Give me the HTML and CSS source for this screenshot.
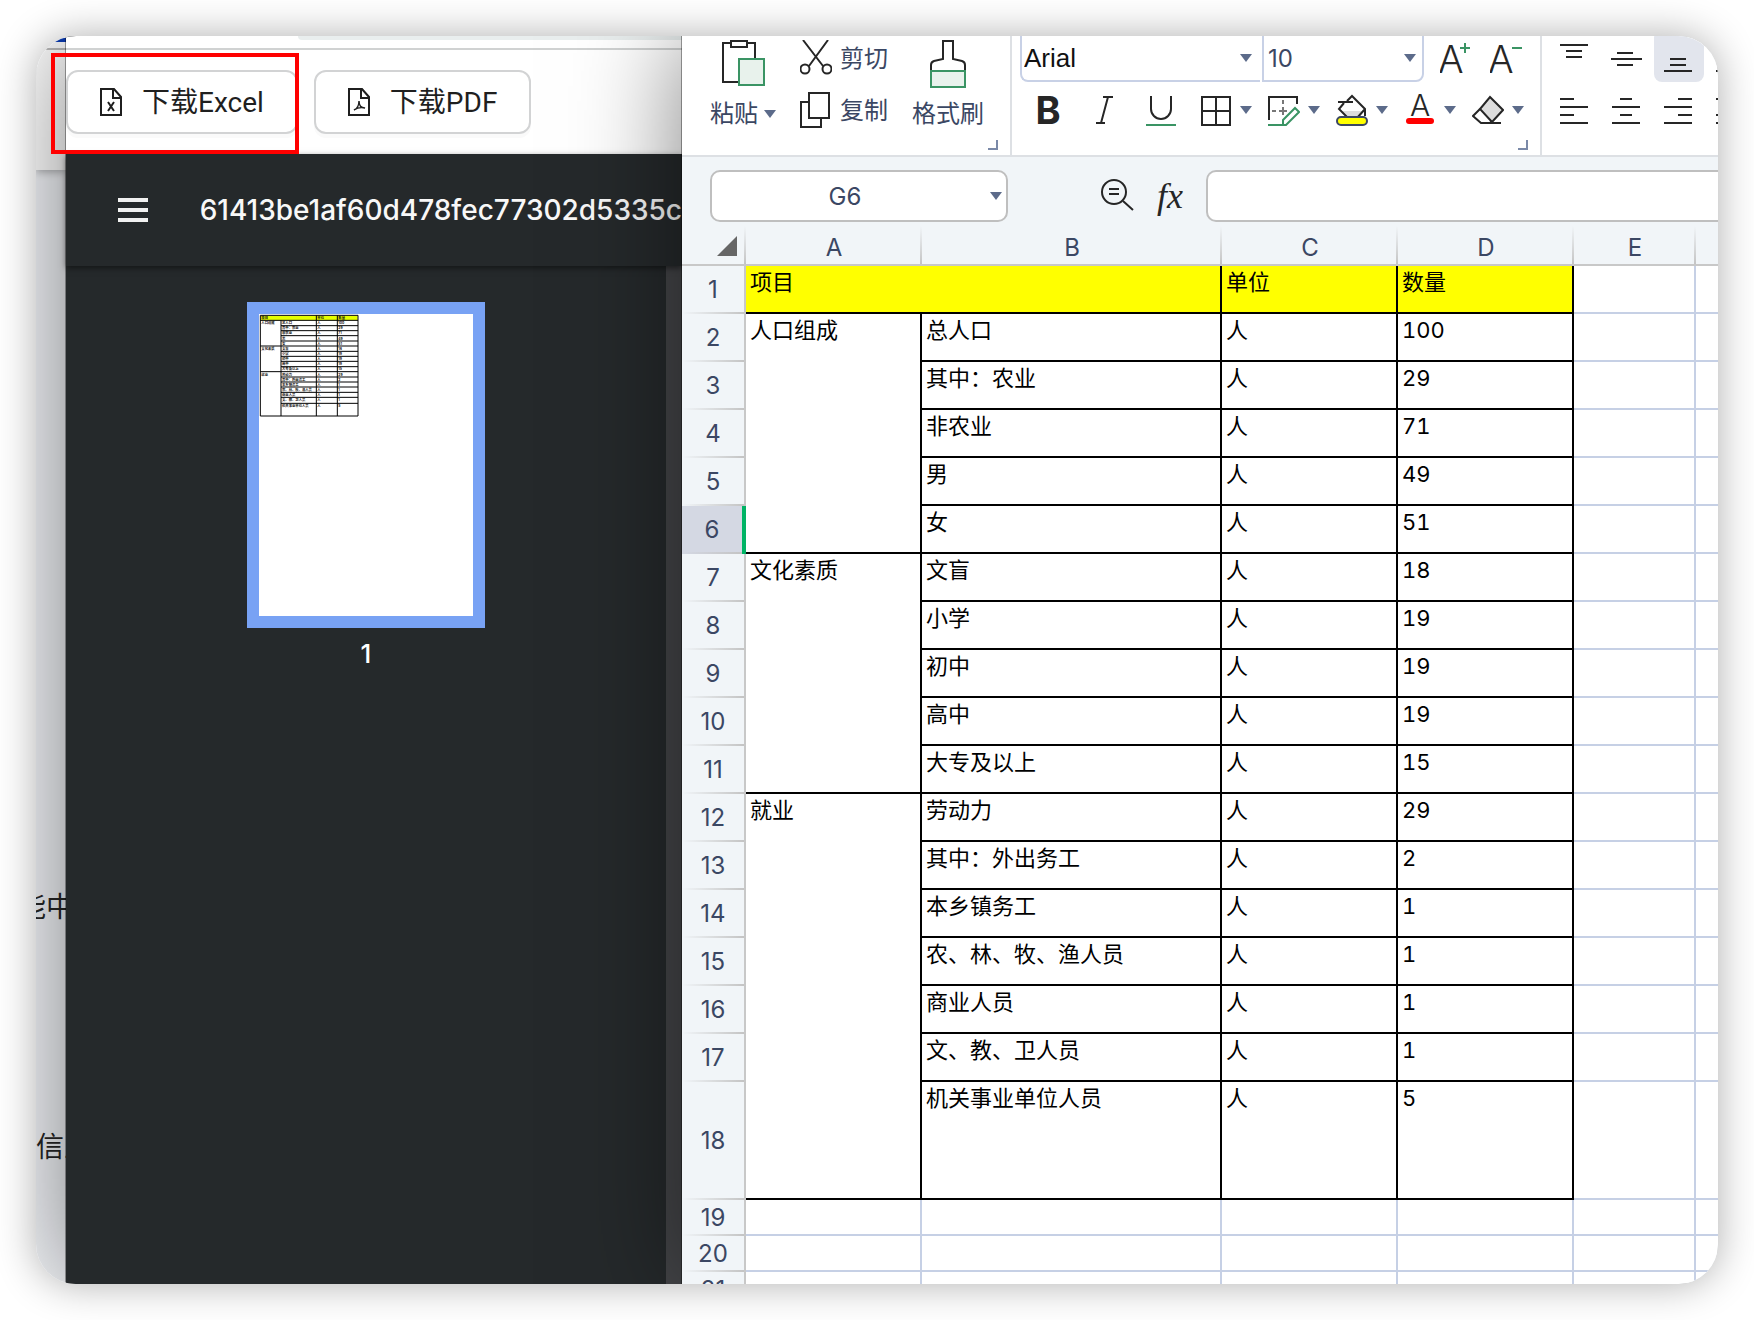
FILE: index.html
```html
<!DOCTYPE html>
<html lang="zh-CN">
<head>
<meta charset="utf-8">
<title>下载Excel</title>
<link rel="stylesheet" href="styles.css">
</head>
<body>
<svg class="defs" width="0" height="0" aria-hidden="true">
  <symbol id="caret" viewBox="0 0 12 8"><path d="M0 0h12L6 8z" fill="#5c6b8a"/></symbol>
  <symbol id="launcher" viewBox="0 0 10 10"><path d="M9 0v9H0" fill="none" stroke="#7a89a8" stroke-width="2"/></symbol>
</svg>
<main class="frame">
  <aside class="backdrop">
    <div class="backdrop-head"><span class="backdrop-tab"></span></div>
    <div class="backdrop-body">
      <p class="backdrop-text first">能中</p>
      <p class="backdrop-text second">信息</p>
    </div>
  </aside>

  <section class="browser">
    <div class="tabbar"><span class="address"></span></div>
    <div class="actions">
      <button class="download" type="button">
        <svg width="22" height="28" viewBox="0 0 22 28" fill="none" stroke="#1f1f1f" stroke-width="2"><path d="M1 1h13l7 8v18H1z"/><path d="M13 1v9h8"/><path d="M8 14l6 9M14 14l-6 9"/></svg>
        <span>下载Excel</span>
      </button>
      <button class="download" type="button">
        <svg width="22" height="28" viewBox="0 0 22 28" fill="none" stroke="#1f1f1f" stroke-width="2"><path d="M1 1h13l7 8v18H1z"/><path d="M13 1v9h8"/><path d="M6 22c3-1 5-5 5-9 0 4 2 7 6 7-4-1-8 0-11 2z" stroke-width="1.5"/></svg>
        <span>下载PDF</span>
      </button>
    </div>
    <div class="pdf-bar">
      <button class="menu" type="button" aria-label="菜单"><i></i><i></i><i></i></button>
      <h1>61413be1af60d478fec77302d5335c</h1>
    </div>
    <div class="pdf-body">
      <div class="thumbs">
        <div class="page">
          <svg width="100" height="104" viewBox="88 73 300 312" font-size="10" font-weight="700" fill="#111">
            <path d="M93 78h291v14H93z" fill="#e6ff00"/>
            <path d="M92 77h293v302H92zM92 92h293M154 108h231M154 123h231M154 138h231M154 154h231M92 169h293M154 185h231M154 200h231M154 215h231M154 231h231M92 246h293M154 262h231M154 277h231M154 292h231M154 308h231M154 323h231M154 341h231M154 92v287M260 77v302M323 77v302" fill="none" stroke="#000" stroke-width="3"/>
            <text x="95" y="89">项目</text><text x="263" y="89">单位</text><text x="326" y="89">数量</text>
            <text x="95" y="104">人口组成</text><text x="95" y="181">文化素质</text><text x="95" y="258">就业</text>
            <text><tspan x="157" y="104">总人口</tspan><tspan x="157" y="119">其中：农业</tspan><tspan x="157" y="134">非农业</tspan><tspan x="157" y="150">男</tspan><tspan x="157" y="165">女</tspan><tspan x="157" y="181">文盲</tspan><tspan x="157" y="196">小学</tspan><tspan x="157" y="211">初中</tspan><tspan x="157" y="227">高中</tspan><tspan x="157" y="242">大专及以上</tspan><tspan x="157" y="258">劳动力</tspan><tspan x="157" y="273">其中：外出务工</tspan><tspan x="157" y="288">本乡镇务工</tspan><tspan x="157" y="304">农、林、牧、渔人员</tspan><tspan x="157" y="319">商业人员</tspan><tspan x="157" y="334">文、教、卫人员</tspan><tspan x="157" y="353">机关事业单位人员</tspan></text>
            <text><tspan x="263" y="104">人</tspan><tspan x="263" y="119">人</tspan><tspan x="263" y="134">人</tspan><tspan x="263" y="150">人</tspan><tspan x="263" y="165">人</tspan><tspan x="263" y="181">人</tspan><tspan x="263" y="196">人</tspan><tspan x="263" y="211">人</tspan><tspan x="263" y="227">人</tspan><tspan x="263" y="242">人</tspan><tspan x="263" y="258">人</tspan><tspan x="263" y="273">人</tspan><tspan x="263" y="288">人</tspan><tspan x="263" y="304">人</tspan><tspan x="263" y="319">人</tspan><tspan x="263" y="334">人</tspan><tspan x="263" y="353">人</tspan></text>
            <text><tspan x="326" y="104">100</tspan><tspan x="326" y="119">29</tspan><tspan x="326" y="134">71</tspan><tspan x="326" y="150">49</tspan><tspan x="326" y="165">51</tspan><tspan x="326" y="181">18</tspan><tspan x="326" y="196">19</tspan><tspan x="326" y="211">19</tspan><tspan x="326" y="227">19</tspan><tspan x="326" y="242">15</tspan><tspan x="326" y="258">29</tspan><tspan x="326" y="273">2</tspan><tspan x="326" y="288">1</tspan><tspan x="326" y="304">1</tspan><tspan x="326" y="319">1</tspan><tspan x="326" y="334">1</tspan><tspan x="326" y="353">5</tspan></text>
          </svg>
        </div>
        <span class="page-no">1</span>
      </div>
      <div class="divider"></div>
    </div>
  </section>

  <section class="sheet">
    <div class="ribbon">
      <div class="group clipboard">
        <button class="tool tall" type="button">
          <svg width="44" height="48" viewBox="0 0 44 48" fill="none" stroke="#262626" stroke-width="2"><path d="M10 3H2v39h16M26 3h8v15"/><path d="M10 1h16v6H10z"/><path d="M18 19h25v26H18z" fill="#e8f2ec" stroke="#3a9464"/></svg>
          <span>粘贴 <svg width="12" height="8"><use href="#caret"/></svg></span>
        </button>
        <div class="pair">
          <button class="tool" type="button">
            <svg width="32" height="36" viewBox="0 0 32 36" fill="none" stroke="#262626" stroke-width="2"><path d="M3 0l20 26M28 0L9 26"/><circle cx="5" cy="29" r="4.500"/><circle cx="27" cy="29" r="4.500"/></svg>
            <span>剪切</span>
          </button>
          <button class="tool" type="button">
            <svg width="32" height="36" viewBox="0 0 32 36" fill="none" stroke="#262626" stroke-width="2"><path d="M9 10H1v25h20v-9"/><path d="M9 1h20v25H9z"/></svg>
            <span>复制</span>
          </button>
        </div>
        <button class="tool tall" type="button">
          <svg width="36" height="48" viewBox="0 0 36 48" fill="none" stroke="#262626" stroke-width="2"><path d="M1 32v-7q0-3 3-4l9-2V1h10v18l9 2q3 1 3 4v7"/><path d="M1 31h34v16H1z" fill="#e8f2ec" stroke="#3a9464"/></svg>
          <span>格式刷</span>
        </button>
        <svg class="launcher" width="10" height="10"><use href="#launcher"/></svg>
      </div>

      <div class="group font">
        <div class="row">
          <label class="pick family"><select aria-label="字体"><option>Arial</option></select><svg width="12" height="8"><use href="#caret"/></svg></label>
          <label class="pick size"><select aria-label="字号"><option>10</option></select><svg width="12" height="8"><use href="#caret"/></svg></label>
          <button class="icon" type="button" aria-label="增大字号"><svg width="32" height="36" viewBox="0 0 32 36"><text class="thin" x="-2" y="32" font-size="38">A</text><path d="M20 7h10M25 2v10" stroke="#3a9464" stroke-width="2"/></svg></button>
          <button class="icon" type="button" aria-label="减小字号"><svg width="32" height="36" viewBox="0 0 32 36"><text class="thin" x="-2" y="32" font-size="38">A</text><path d="M22 7h10" stroke="#3a9464" stroke-width="2"/></svg></button>
        </div>
        <div class="row second">
          <div class="styles">
            <button class="icon" type="button" aria-label="加粗"><svg width="32" height="36" viewBox="0 0 32 36"><text class="bold" x="16" y="32" font-size="38" text-anchor="middle">B</text></svg></button>
            <button class="icon" type="button" aria-label="倾斜"><svg width="32" height="36" viewBox="0 0 32 36" stroke="#262626" stroke-width="2" fill="none"><path d="M15 5h10M8 31h9M20 5l-7 26"/></svg></button>
            <button class="icon" type="button" aria-label="下划线"><svg width="32" height="36" viewBox="0 0 32 36" stroke="#262626" stroke-width="2" fill="none"><path d="M7 4v13a10 10 0 0 0 20 0V4"/><path d="M2 33h30" stroke="#3a9464"/></svg></button>
          </div>
          <div class="menus">
            <button class="icon drop" type="button" aria-label="边框"><svg width="32" height="36" viewBox="0 0 32 36" stroke="#262626" stroke-width="2" fill="none"><path d="M2 5h28v28H2zM16 5v28M2 19h28"/></svg><svg width="12" height="8"><use href="#caret"/></svg></button>
            <button class="icon drop" type="button" aria-label="绘制边框"><svg width="32" height="36" viewBox="0 0 32 36" stroke="#262626" stroke-width="2" fill="none"><path d="M1 28V5h28v7"/><path d="M4 19h4M11 19h8M15 8v4M15 15v8" stroke="#777"/><path d="M0 33h18l13-13-4-4-12 12v5" stroke="#3a9464"/></svg><svg width="12" height="8"><use href="#caret"/></svg></button>
            <button class="icon drop" type="button" aria-label="填充颜色"><svg width="32" height="36" viewBox="0 0 32 36" stroke="#262626" stroke-width="2" fill="none"><path d="M6 19h21l-6 7H11z" fill="#ddd" stroke="none"/><path d="M2 10h15M11 9l5-5 13 13v7M8 11l-5 6 9 9M29 17l-8 9"/><rect x="1" y="25" width="30" height="8" rx="4" fill="#ff0" stroke="#3b4763"/></svg><svg width="12" height="8"><use href="#caret"/></svg></button>
            <button class="icon drop" type="button" aria-label="字体颜色"><svg width="32" height="36" viewBox="0 0 32 36"><text class="thin" x="16" y="24" font-size="30" text-anchor="middle">A</text><rect x="2" y="26" width="28" height="6" rx="3" fill="#f00"/></svg><svg width="12" height="8"><use href="#caret"/></svg></button>
            <button class="icon drop" type="button" aria-label="清除"><svg width="32" height="36" viewBox="0 0 32 36" stroke="#262626" stroke-width="2" fill="none"><path d="M18 5l13 13-11 12L8 17z" fill="#ddd"/><path d="M8 17l-7 7 8 7h20M20 29l-2 2"/></svg><svg width="12" height="8"><use href="#caret"/></svg></button>
          </div>
        </div>
        <svg class="launcher" width="10" height="10"><use href="#launcher"/></svg>
      </div>

      <div class="group align">
        <div class="row">
          <button class="icon wide" type="button" aria-label="顶端对齐"><svg width="32" height="36" viewBox="0 0 32 36"><path class="ln" d="M1 5h28M7 11h16M7 17h16"/></svg></button>
          <button class="icon wide" type="button" aria-label="垂直居中"><svg width="32" height="36" viewBox="0 0 32 36"><path class="ln" d="M6 13h16M-1 19h32M6 25h16"/></svg></button>
          <button class="icon wide on" type="button" aria-label="底端对齐"><svg width="32" height="36" viewBox="0 0 32 36"><path class="ln" d="M7 19h16M7 25h16M1 31h28"/></svg></button>
          <button class="icon wide" type="button" aria-label="自动换行"><svg width="32" height="36" viewBox="0 0 32 36"><path d="M-1 17l6 6" stroke="#3a9464" stroke-width="2"/><path class="ln" d="M1 31h28"/></svg></button>
        </div>
        <div class="row second">
          <button class="icon wide" type="button" aria-label="左对齐"><svg width="32" height="36" viewBox="0 0 32 36"><path class="ln" d="M1 7h14M1 15h28M1 23h14M1 31h28"/></svg></button>
          <button class="icon wide" type="button" aria-label="水平居中"><svg width="32" height="36" viewBox="0 0 32 36"><path class="ln" d="M9 7h12M1 15h28M9 23h12M1 31h28"/></svg></button>
          <button class="icon wide" type="button" aria-label="右对齐"><svg width="32" height="36" viewBox="0 0 32 36"><path class="ln" d="M15 7h14M1 15h28M15 23h14M1 31h28"/></svg></button>
          <button class="icon wide" type="button" aria-label="两端对齐"><svg width="32" height="36" viewBox="0 0 32 36"><path class="ln" d="M1 7h28M3 15h26M1 23h28M1 31h28"/></svg></button>
        </div>
      </div>
    </div>

    <div class="formula">
      <label class="pick name"><input type="text" value="G6" aria-label="名称框"><svg width="12" height="8"><use href="#caret"/></svg></label>
      <button class="icon" type="button" aria-label="查找"><svg width="34" height="36" viewBox="0 0 34 36" fill="none" stroke="#262626" stroke-width="2"><circle cx="14" cy="14" r="12"/><path d="M23 23l10 9M9 11h10M9 16h10"/></svg></button>
      <button class="icon fx" type="button">fx</button>
      <input class="entry" type="text" aria-label="编辑栏">
    </div>

    <table class="grid">
      <colgroup><col class="c-no"><col class="c-a"><col class="c-b"><col class="c-a"><col class="c-a"><col class="c-e"><col></colgroup>
      <thead>
        <tr><th class="corner"><svg width="20" height="20" viewBox="0 0 20 20"><path d="M20 0v20H0z" fill="#666"/></svg></th><th>A</th><th>B</th><th>C</th><th>D</th><th>E</th><th></th></tr>
      </thead>
      <tbody>
        <tr class="title"><th>1</th><td class="k" colspan="2">项目</td><td class="k">单位</td><td class="k">数量</td><td></td><td></td></tr>
        <tr><th>2</th><td class="k" rowspan="5">人口组成</td><td class="k">总人口</td><td class="k">人</td><td class="k">100</td><td></td><td></td></tr>
        <tr><th>3</th><td class="k">其中：农业</td><td class="k">人</td><td class="k">29</td><td></td><td></td></tr>
        <tr><th>4</th><td class="k">非农业</td><td class="k">人</td><td class="k">71</td><td></td><td></td></tr>
        <tr><th>5</th><td class="k">男</td><td class="k">人</td><td class="k">49</td><td></td><td></td></tr>
        <tr class="current"><th>6</th><td class="k">女</td><td class="k">人</td><td class="k">51</td><td></td><td></td></tr>
        <tr><th>7</th><td class="k" rowspan="5">文化素质</td><td class="k">文盲</td><td class="k">人</td><td class="k">18</td><td></td><td></td></tr>
        <tr><th>8</th><td class="k">小学</td><td class="k">人</td><td class="k">19</td><td></td><td></td></tr>
        <tr><th>9</th><td class="k">初中</td><td class="k">人</td><td class="k">19</td><td></td><td></td></tr>
        <tr><th>10</th><td class="k">高中</td><td class="k">人</td><td class="k">19</td><td></td><td></td></tr>
        <tr><th>11</th><td class="k">大专及以上</td><td class="k">人</td><td class="k">15</td><td></td><td></td></tr>
        <tr><th>12</th><td class="k" rowspan="7">就业</td><td class="k">劳动力</td><td class="k">人</td><td class="k">29</td><td></td><td></td></tr>
        <tr><th>13</th><td class="k">其中：外出务工</td><td class="k">人</td><td class="k">2</td><td></td><td></td></tr>
        <tr><th>14</th><td class="k">本乡镇务工</td><td class="k">人</td><td class="k">1</td><td></td><td></td></tr>
        <tr><th>15</th><td class="k">农、林、牧、渔人员</td><td class="k">人</td><td class="k">1</td><td></td><td></td></tr>
        <tr><th>16</th><td class="k">商业人员</td><td class="k">人</td><td class="k">1</td><td></td><td></td></tr>
        <tr><th>17</th><td class="k">文、教、卫人员</td><td class="k">人</td><td class="k">1</td><td></td><td></td></tr>
        <tr class="high"><th>18</th><td class="k">机关事业单位人员</td><td class="k">人</td><td class="k">5</td><td></td><td></td></tr>
        <tr class="low"><th>19</th><td></td><td></td><td></td><td></td><td></td><td></td></tr>
        <tr class="low"><th>20</th><td></td><td></td><td></td><td></td><td></td><td></td></tr>
        <tr class="low"><th>21</th><td></td><td></td><td></td><td></td><td></td><td></td></tr>
      </tbody>
    </table>
  </section>
  <div class="highlight"></div>
</main>
</body>
</html>
```

FILE: styles.css
```css
* { box-sizing: border-box; }
body {
  margin: 0;
  padding: 36px;
  height: 100vh;
  overflow: hidden;
  background: #fff;
  font-family: Inter, "Noto Sans CJK SC", sans-serif;
  font-size: 24px;
  color: #3b4763;
}
svg { display: block; flex: none; }
.defs { position: absolute; }
button {
  margin: 0;
  padding: 0;
  border: 0;
  background: none;
  font: inherit;
  color: inherit;
}
.frame {
  position: relative;
  display: grid;
  grid-template-columns: 30px 616px minmax(0, 1fr);
  height: 100%;
  overflow: hidden;
  border-radius: 40px;
  box-shadow: 0 0 40px rgba(0, 0, 0, .32);
}

/* page behind the browser window */
.backdrop { overflow: hidden; background: #f3f5f9; }
.backdrop-head {
  height: 134px;
  padding-top: 2px;
  background: linear-gradient(#bbb, #bbb) 0 12px / 100% 2px no-repeat #fff;
  box-shadow: 0 2px 8px rgba(0, 0, 0, .3);
}
.backdrop-tab { display: block; width: 16px; height: 4px; margin-left: auto; background: #0b3db5; }
.backdrop-text {
  margin: 0;
  width: 60px;
  font-size: 28px;
  line-height: 40px;
  color: #262626;
  white-space: nowrap;
}
.first { margin: 717px 0 0 -18px; }
.second { margin-top: 200px; }

/* browser window with the PDF viewer */
.browser {
  display: flex;
  flex-direction: column;
  min-height: 0;
  background: #25292b;
  box-shadow: 0 0 100px rgba(0, 0, 0, .5), 0 0 0 1px rgba(0, 0, 0, .35);
  z-index: 1;
}
.tabbar { flex: none; height: 14px; background: #fff; border-bottom: 2px solid #d0d2d2; }
.address { display: block; height: 4px; margin-left: 232px; border-bottom-left-radius: 12px; background: #e9eeee; }
.actions {
  display: flex;
  flex: none;
  gap: 16px;
  height: 104px;
  padding: 20px 0;
  background: #fff;
}
.download {
  display: flex;
  align-items: center;
  gap: 20px;
  height: 64px;
  padding: 0 32px;
  border: 2px solid #d2d3d4;
  border-radius: 12px;
  box-shadow: 0 4px 0 #fafafa;
  font-family: Roboto, "Noto Sans CJK SC", sans-serif;
  font-size: 28px;
  line-height: 40px;
  color: #1f1f1f;
  white-space: nowrap;
}
.download span { padding-top: 2px; }
.pdf-bar {
  display: flex;
  flex: none;
  align-items: center;
  gap: 52px;
  height: 112px;
  padding-left: 52px;
  overflow: hidden;
  box-shadow: 0 2px 6px rgba(0, 0, 0, .5);
  z-index: 1;
}
.menu { display: grid; gap: 6px; width: 32px; }
.menu i { height: 4px; background: #f1f1f1; }
h1 {
  margin: 0;
  font-size: 28px;
  font-weight: 500;
  line-height: 40px;
  color: #f8f8f8;
  white-space: nowrap;
}
.pdf-body { display: flex; flex: 1; min-height: 0; }
.thumbs { display: flex; flex: 1; flex-direction: column; align-items: center; padding-top: 36px; }
.page { width: 238px; height: 326px; border: 12px solid #78a2f4; background: #fff; }
.page-no { margin-top: 10px; line-height: 32px; font-size: 26px; font-weight: 500; color: #fff; }
.divider { width: 16px; background: #444548; }

/* spreadsheet window */
.sheet {
  overflow: hidden;
  background: #f1f5f8;
  box-shadow: 0 0 100px rgba(0, 0, 0, .5), 0 0 0 1px rgba(0, 0, 0, .35);
  z-index: 2;
}
.ribbon {
  display: flex;
  height: 121px;
  border-bottom: 2px solid #dde0e4;
  background: #fff;
}
.group { position: relative; flex: none; border-right: 2px solid #dde0e4; }
.launcher { position: absolute; right: 12px; bottom: 5px; }
.clipboard { display: flex; gap: 24px; width: 330px; padding: 4px 0 0 28px; }
.tool { display: flex; align-items: center; gap: 8px; height: 36px; line-height: 28px; white-space: nowrap; }
.tool span { display: flex; align-items: center; gap: 6px; padding-top: 2px; }
.tall { flex-direction: column; height: 88px; gap: 10px; }
.pair { display: grid; gap: 16px; align-content: start; }
.font { width: 530px; }
.row { display: flex; height: 52px; margin-top: -6px; }
.row.second { height: 36px; margin-top: 10px; }
.font .row { padding-left: 8px; }
.pick { position: relative; display: block; }
.pick select, .pick input {
  width: 100%;
  height: 100%;
  margin: 0;
  appearance: none;
  border: 2px solid #c8d1e6;
  background: #fff;
  font: inherit;
  color: inherit;
}
.pick select { padding: 4px 0 0 4px; }
.pick svg { position: absolute; right: 8px; top: 24px; }
.family { width: 240px; margin-right: 2px; font-family: "Liberation Sans", sans-serif; font-size: 26px; color: #111; }
.family select { border-right: 0; border-radius: 0 0 0 8px; padding-left: 2px; }
.size { width: 162px; margin-right: 16px; }
.size select { border-radius: 0 0 8px 0; }
.font .row > .icon { margin-right: 18px; padding-top: 6px; }
.icon { display: flex; align-items: center; }
.thin { fill: #262626; font-weight: 300; }
.bold { fill: #262626; font-weight: 700; }
.ln { stroke: #262626; stroke-width: 2; }
.font .row.second { gap: 24px; padding-left: 20px; }
.styles { display: flex; gap: 24px; }
.menus { display: flex; gap: 16px; }
.drop { gap: 8px; }
.align { border: 0; padding-left: 8px; }
.align .row { gap: 2px; }
.wide { justify-content: center; width: 50px; }
.align .row:first-child .wide { padding-top: 4px; }
.on { border-radius: 8px; background: #e2e5ed; }

.formula { display: flex; align-items: center; height: 65px; padding: 13px 0 0 28px; }
.name { width: 298px; height: 52px; margin-right: 92px; }
.name input { padding: 0 28px 0 0; border-color: #bfbfbf; border-radius: 10px; text-align: center; }
.name svg { right: 6px; top: 22px; }
.fx {
  width: 32px;
  margin: 0 20px;
  justify-content: center;
  font-family: "Liberation Serif", serif;
  font-size: 36px;
  font-style: italic;
  line-height: 36px;
  color: #262626;
}
.entry {
  flex: 1;
  min-width: 0;
  height: 52px;
  border: 2px solid #bfbfbf;
  border-right: 0;
  border-radius: 10px 0 0 10px;
  background: #fff;
  font: inherit;
}

.grid { width: 100%; table-layout: fixed; border-collapse: separate; border-spacing: 0; }
.c-no { width: 64px; }
.c-a { width: 176px; }
.c-b { width: 300px; }
.c-e { width: 122px; }
.grid th { padding: 0; font-weight: 400; font-size: 24px; line-height: 28px; }
.grid thead th {
  height: 44px;
  padding-top: 10px;
  border-bottom: 2px solid #c8c8c8;
  background: linear-gradient(transparent 4px, #c4c4c4) right / 2px 100% no-repeat;
}
.grid thead th:last-child { background: none; }
.grid thead .corner { padding: 6px 0 0 35px; }
tbody th {
  border-right: 2px solid #c8c8c8;
  background: linear-gradient(to right, transparent, #c4c4c4) bottom / 100% 2px no-repeat #f1f5f8;
}
.current th { border-right: 4px solid #00b365; background-color: #d4d8e3; }
td {
  height: 48px;
  padding: 0 4px;
  border-right: 2px solid #c6d0e5;
  border-bottom: 2px solid #c6d0e5;
  background: #fff;
  vertical-align: top;
  font-size: 22px;
  line-height: 32px;
  font-variant-numeric: tabular-nums;
  color: #000;
  white-space: nowrap;
}
td:last-child { border-right: 0; }
.k { border-color: #000; }
.title .k { background: #ff0; }
.high td { height: 118px; }
.high td[rowspan] { height: auto; }
.low td { height: 36px; }

/* red callout round the first button */
.highlight {
  position: absolute;
  left: 15px;
  top: 17px;
  z-index: 3;
  width: 248px;
  height: 101px;
  border: 4px solid #f00;
}
```
